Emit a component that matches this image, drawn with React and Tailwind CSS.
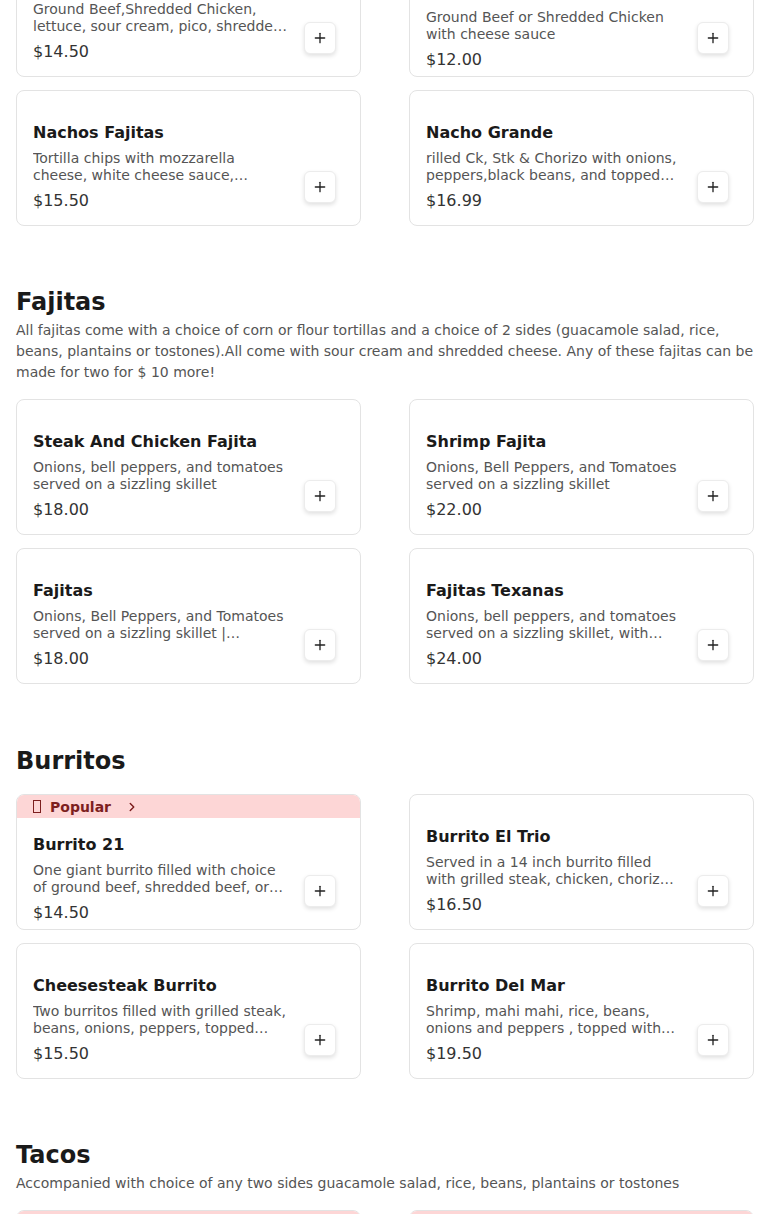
import React from 'react';
import { Plus, ChevronRight } from 'lucide-react';

const sections = [
  {
    id: 'nachos',
    title: null,
    items: [
      { name: 'Nachos Supreme', desc: 'Ground Beef,Shredded Chicken, lettuce, sour cream, pico, shredded cheese and jalapeños', price: '$14.50' },
      { name: 'Nachos Con Queso', desc: 'Ground Beef or Shredded Chicken with cheese sauce', price: '$12.00', popular: true },
      { name: 'Nachos Fajitas', desc: 'Tortilla chips with mozzarella cheese, white cheese sauce, peppers and onions', price: '$15.50' },
      { name: 'Nacho Grande', desc: 'rilled Ck, Stk & Chorizo with onions, peppers,black beans, and topped with cheese sauce', price: '$16.99' },
    ],
  },
  {
    id: 'fajitas',
    title: 'Fajitas',
    note: 'All fajitas come with a choice of corn or flour tortillas and a choice of 2 sides (guacamole salad, rice, beans, plantains or tostones).All come with sour cream and shredded cheese. Any of these fajitas can be made for two for $ 10 more!',
    items: [
      { name: 'Steak And Chicken Fajita', desc: 'Onions, bell peppers, and tomatoes served on a sizzling skillet', price: '$18.00' },
      { name: 'Shrimp Fajita', desc: 'Onions, Bell Peppers, and Tomatoes served on a sizzling skillet', price: '$22.00' },
      { name: 'Fajitas', desc: 'Onions, Bell Peppers, and Tomatoes served on a sizzling skillet | Chicken, Steak or Mixed', price: '$18.00' },
      { name: 'Fajitas Texanas', desc: 'Onions, bell peppers, and tomatoes served on a sizzling skillet, with steak, chicken and shrimp', price: '$24.00' },
    ],
  },
  {
    id: 'burritos',
    title: 'Burritos',
    items: [
      { name: 'Burrito 21', desc: 'One giant burrito filled with choice of ground beef, shredded beef, or chicken', price: '$14.50', popular: true },
      { name: 'Burrito El Trio', desc: 'Served in a 14 inch burrito filled with grilled steak, chicken, chorizo and cheese', price: '$16.50' },
      { name: 'Cheesesteak Burrito', desc: 'Two burritos filled with grilled steak, beans, onions, peppers, topped with cheese sauce', price: '$15.50' },
      { name: 'Burrito Del Mar', desc: 'Shrimp, mahi mahi, rice, beans, onions and peppers , topped with cheese sauce', price: '$19.50' },
    ],
  },
  {
    id: 'tacos',
    title: 'Tacos',
    note: 'Accompanied with choice of any two sides guacamole salad, rice, beans, plantains or tostones',
    items: [
      { name: 'Tacos Al Pastor', desc: 'Three tacos with marinated pork and pineapple', price: '$13.50', popular: true },
      { name: 'Tacos De Birria', desc: 'Three birria tacos with consomé', price: '$15.00', popular: true },
    ],
  },
];

const ItemCard = ({ item }) => (
  <div className="h-[136px] flex flex-col bg-white border border-[#e3e3e3] rounded-lg overflow-hidden">
    {item.popular && (
      <div className="h-[23px] shrink-0 bg-[#fdd6d6] flex items-center pl-4 text-[#7d1f1f] text-sm font-bold">
        <span className="w-[8px] h-[13px] border border-[#7d1f1f] mr-[9px]" />
        <span>Popular</span>
        <ChevronRight size={14} strokeWidth={2.5} className="ml-[14px]" />
      </div>
    )}
    <div className="flex-1 flex justify-between pl-4 pr-6">
      <div className={`flex-1 min-w-0 pr-4 ${item.popular ? 'pt-[15px]' : 'pt-[30px]'}`}>
        <h4 className="text-base leading-6 font-bold text-[#1a1a1a]">{item.name}</h4>
        <p className="mt-[5px] text-sm leading-[17px] text-[#555] line-clamp-2">{item.desc}</p>
        <p className="mt-[5px] text-base leading-6 text-[#333]">{item.price}</p>
      </div>
      <button className={`self-start w-8 h-8 shrink-0 rounded-md bg-white border border-[#ececec] shadow-[0_2px_4px_rgba(0,0,0,0.12)] flex items-center justify-center text-[#222] ${item.popular ? 'mt-[57px]' : 'mt-[80px]'}`}>
        <Plus size={16} strokeWidth={2} />
      </button>
    </div>
  </div>
);

const App = () => {
  return (
    <div className="min-h-screen bg-white font-['DejaVu_Sans',sans-serif] overflow-hidden">
      <div className="px-4 -mt-[59px]">
        {sections.map((section, i) => (
          <section key={section.id} className={i === 0 ? '' : section.note ? 'mt-[60px]' : 'mt-[61px]'}>
            {section.title && (
              <h2 className="text-2xl leading-8 font-bold text-[#1a1a1a]">{section.title}</h2>
            )}
            {section.note && (
              <p className="mt-[2px] text-sm leading-[21px] text-[#555]">{section.note}</p>
            )}
            <div className={`grid grid-cols-2 gap-x-12 gap-y-[13px] ${section.title ? (section.note ? 'mt-[16px]' : 'mt-[17px]') : ''}`}>
              {section.items.map((item, j) => (
                <ItemCard key={j} item={item} />
              ))}
            </div>
          </section>
        ))}
      </div>
    </div>
  );
};

export default App;
